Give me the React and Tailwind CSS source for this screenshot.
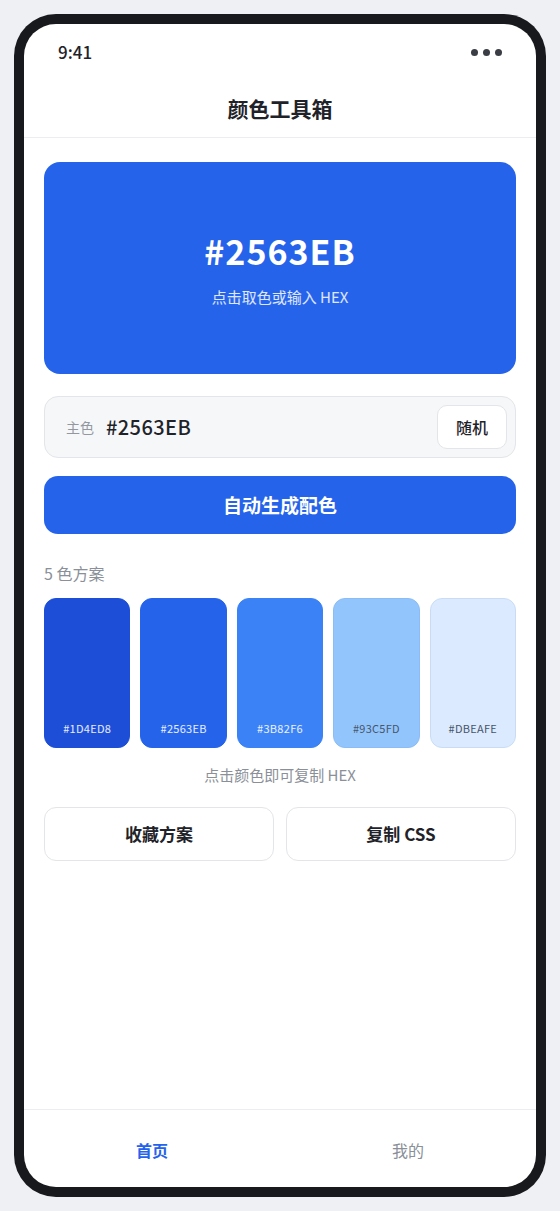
import React from "react";

const swatches = [
  { hex: "#1D4ED8", bg: "bg-[#1d4ed8]", text: "text-white/90", border: "border-[#1d4ed8]" },
  { hex: "#2563EB", bg: "bg-[#2563eb]", text: "text-white/90", border: "border-[#2563eb]" },
  { hex: "#3B82F6", bg: "bg-[#3b82f6]", text: "text-white/90", border: "border-[#3b82f6]" },
  { hex: "#93C5FD", bg: "bg-[#93c5fd]", text: "text-[#475569]", border: "border-[#8bbcf6]" },
  { hex: "#DBEAFE", bg: "bg-[#dbeafe]", text: "text-[#475569]", border: "border-[#c9dcf7]" },
];

export default function App() {
  return (
    <div
      className="min-h-screen bg-[#eef0f4] p-[14px]"
      style={{ fontFamily: '"Noto Sans CJK SC", "Noto Sans", sans-serif' }}
    >
      <div className="h-[1183px] rounded-[42px] bg-[#18191c] p-[10px]">
        <div className="flex h-full flex-col overflow-hidden rounded-[32px] bg-white">
          {/* status bar */}
          <div className="flex h-[56px] items-center justify-between px-[34px]">
            <span className="text-[17px] font-medium text-[#1f2329]">9:41</span>
            <div className="flex gap-[5px]">
              <span className="h-[7px] w-[7px] rounded-full bg-[#3a3d44]" />
              <span className="h-[7px] w-[7px] rounded-full bg-[#3a3d44]" />
              <span className="h-[7px] w-[7px] rounded-full bg-[#3a3d44]" />
            </div>
          </div>

          {/* header */}
          <div className="flex h-[58px] items-center justify-center border-b border-[#ebedf0]">
            <h1 className="text-[21px] font-bold text-[#1f2329]">颜色工具箱</h1>
          </div>

          {/* content */}
          <div className="flex-1 px-5 pt-6">
            <div className="flex h-[212px] flex-col items-center justify-center rounded-2xl bg-[#2563eb]">
              <div className="text-[34px] font-bold leading-[44px] tracking-[1px] text-white">#2563EB</div>
              <div className="mt-[13px] text-[15px] leading-[22px] text-white/85">点击取色或输入 HEX</div>
            </div>

            <div className="mt-[22px] flex h-[62px] items-center rounded-[14px] border border-[#e3e5e9] bg-[#f6f7f9] pl-[21px] pr-[8px]">
              <span className="text-[14px] text-[#9398a0]">主色</span>
              <span className="ml-[12px] text-[20px] font-medium tracking-[0.4px] text-[#1f2329]">#2563EB</span>
              <button className="ml-auto flex h-[44px] w-[70px] items-center justify-center rounded-[10px] border border-[#e3e5e9] bg-white text-[16px] font-medium text-[#1f2329]">
                随机
              </button>
            </div>

            <button className="mt-[18px] flex h-[58px] w-full items-center justify-center rounded-[14px] bg-[#2563eb] text-[19px] font-bold text-white">
              自动生成配色
            </button>

            <div className="mt-[27px] text-[16px] leading-[24px] text-[#8a8f98]">5 色方案</div>

            <div className="mt-[13px] grid grid-cols-5 gap-[10px]">
              {swatches.map((s) => (
                <div
                  key={s.hex}
                  className={`flex h-[150px] items-end justify-center rounded-[12px] border pb-[11px] ${s.bg} ${s.border}`}
                >
                  <span className={`text-[11px] tracking-wide ${s.text}`}>{s.hex}</span>
                </div>
              ))}
            </div>

            <div className="mt-[17px] text-center text-[15px] leading-[20px] text-[#8a8f98]">点击颜色即可复制 HEX</div>

            <div className="mt-[22px] grid grid-cols-2 gap-[12px]">
              <button className="flex h-[54px] items-center justify-center rounded-[12px] border border-[#e3e5e9] bg-white text-[17px] font-bold text-[#1f2329]">
                收藏方案
              </button>
              <button className="flex h-[54px] items-center justify-center rounded-[12px] border border-[#e3e5e9] bg-white text-[17px] font-bold text-[#1f2329]">
                复制 CSS
              </button>
            </div>
          </div>

          {/* tab bar */}
          <div className="grid h-[78px] grid-cols-2 border-t border-[#ebedf0] pt-[28px]">
            <div className="text-center text-[16px] font-bold leading-[24px] text-[#2563eb]">首页</div>
            <div className="text-center text-[16px] leading-[24px] text-[#8a8f98]">我的</div>
          </div>
        </div>
      </div>
    </div>
  );
}
